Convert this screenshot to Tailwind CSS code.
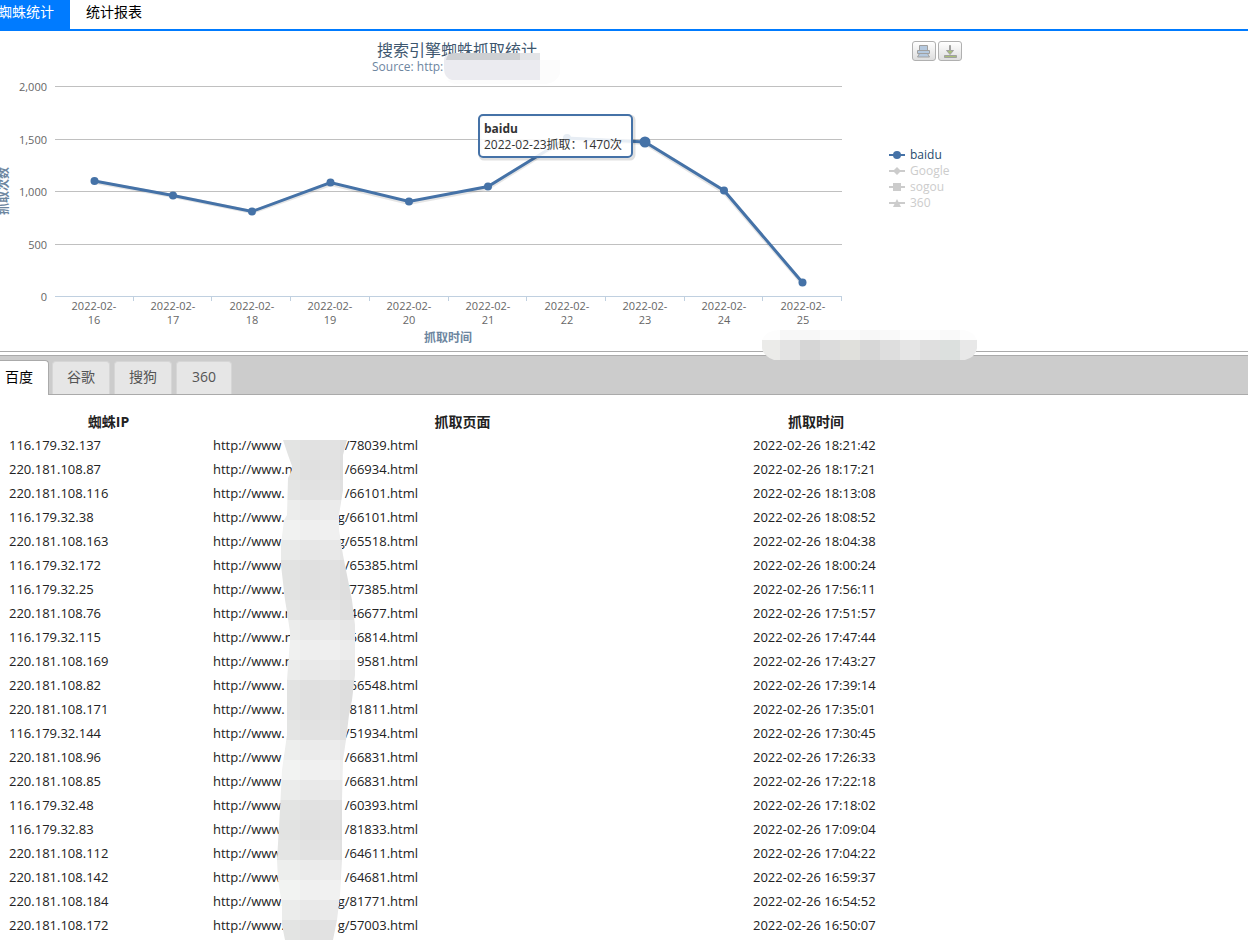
<!DOCTYPE html>
<html lang="zh-CN">
<head>
<meta charset="utf-8">
<title>蜘蛛统计</title>
<script src="https://cdn.jsdelivr.net/npm/@tailwindcss/browser@4"></script>
</head>
<body class="overflow-x-hidden bg-white font-['Open_Sans','Noto_Sans_CJK_SC',sans-serif] text-sm text-[#222]">
<nav class="flex h-[31px] border-b-2 border-[#007bff] leading-6">
  <a href="#" class="-ml-[2px] w-[72px] bg-[#007bff] text-white">蜘蛛统计</a>
  <a href="#" class="px-4 text-black">统计报表</a>
</nav>

<section class="relative flex h-[321px] border-b border-[#aaa]">
  <svg width="870" height="320" viewBox="0 31 870 320" class="shrink-0">
    <text x="457" y="56" text-anchor="middle" font-size="16" fill="#3e576f">搜索引擎蜘蛛抓取统计</text>
    <text x="372" y="71" font-size="12" fill="#6d869f">Source: http:</text>
    <path d="M444 60q0-6 6-6h90v26h-88q-8-2-8-12z" fill="#ebebf0"/>
    <path d="M446 60q1-7 8-7h66v7z" fill="#cdcfd2"/><path d="M520 53h20v7h-20z" fill="#e3e4e7"/>
    <path d="M540 60h20v14q-4 9-14 10h-88q-8 0-11-4h93z" fill="#fcfcfc"/>
    <path d="M55 86.500H842M55 139.500H842M55 191.500H842M55 244.500H842" stroke="#c0c0c0"/>
    <path d="M55 296.500H842M133.500 296v5M211.500 296v5M290.500 296v5M369.500 296v5M448.500 296v5M526.500 296v5M605.500 296v5M684.500 296v5M762.500 296v5M841.500 296v5" stroke="#c0d0e0" fill="none"/>
    <g font-size="11" fill="#666" text-anchor="end">
      <text x="47" y="91">2,000</text><text x="47" y="144">1,500</text><text x="47" y="196">1,000</text><text x="47" y="249">500</text><text x="47" y="301">0</text>
    </g>
    <g id="dates" font-size="11" fill="#666" text-anchor="middle"></g>
    <text x="448" y="342" text-anchor="middle" font-size="12" font-weight="bold" fill="#6d869f">抓取时间</text>
    <text transform="translate(8 191) rotate(-90)" text-anchor="middle" font-size="12" font-weight="bold" fill="#6d869f">抓取次数</text>
    <polyline points="95,182 173,196 252,212 331,184 409,203 488,188 567,139 645,143 724,192 803,284" fill="none" stroke="#000" stroke-opacity=".1" stroke-width="4"/>
    <polyline points="94.500,181 173,195.500 252,211.500 330.500,182.500 409,201.500 488,186.500 567,138 645,142 724,190.500 802.500,282.500" fill="none" stroke="#4572a7" stroke-width="3"/>
    <g fill="#4572a7">
      <circle cx="94.500" cy="181" r="4"/><circle cx="173" cy="195.500" r="4"/><circle cx="252" cy="211.500" r="4"/><circle cx="330.500" cy="182.500" r="4"/><circle cx="409" cy="201.500" r="4"/><circle cx="488" cy="186.500" r="4"/><circle cx="567" cy="138" r="4"/>
      <circle cx="645" cy="142" r="5.500"/><circle cx="724" cy="190.500" r="4"/><circle cx="802.500" cy="282.500" r="4"/>
    </g>
    <rect x="480" y="116" width="154" height="43" rx="4" fill="none" stroke="#000" stroke-opacity=".12" stroke-width="3"/>
    <rect x="479" y="115" width="153" height="42" rx="4" fill="#fff" fill-opacity=".87" stroke="#4572a7" stroke-width="2"/>
    <text x="484" y="133" font-size="12" font-weight="bold" fill="#333">baidu</text>
    <text x="484" y="149" font-size="12" fill="#333">2022-02-23抓取：1470次</text>
  </svg>
  <div class="pl-[19px] pt-[10px]">
    <div class="flex gap-[2px] pl-[23px]">
      <button aria-label="打印" class="h-5 w-6 rounded-[3px] border border-[#b0b0b0] bg-linear-to-b from-white to-[#dedede]">
        <svg width="22" height="18" viewBox="0 0 22 18" fill="#b5c9df" stroke="#a0a0a0"><path d="M6.500 3.500h8v5h-8zM4.500 8.500h12v3h-12zM6.500 11.500h8l2 3.500h-12z"/></svg>
      </button>
      <button aria-label="下载" class="h-5 w-6 rounded-[3px] border border-[#b0b0b0] bg-linear-to-b from-white to-[#dedede]">
        <svg width="22" height="18" viewBox="0 0 22 18" fill="#a8bf77" stroke="#a0a0a0"><path d="M10.500 3.500h1v5h3l-3.500 4-3.500-4h3zM5.500 13.500h12v2h-12z"/></svg>
      </button>
    </div>
    <div class="flex flex-col items-start pt-[86px] text-xs leading-4 text-[#ccc]">
      <button class="flex items-center gap-[5px] text-[#274b6d]"><svg width="16" height="10" fill="#4572a7"><path d="M0 4h16v2H0z"/><circle cx="8" cy="5" r="4"/></svg>baidu</button>
      <button class="flex items-center gap-[5px]"><svg width="16" height="10" fill="#ccc"><path d="M0 4h16v2H0zM8 1l4 4-4 4-4-4z"/></svg>Google</button>
      <button class="flex items-center gap-[5px]"><svg width="16" height="10" fill="#ccc"><path d="M0 4h16v2H0zM4 1h8v8H4z"/></svg>sogou</button>
      <button class="flex items-center gap-[5px]"><svg width="16" height="10" fill="#ccc"><path d="M0 4h16v2H0zM8 1l4 8H4z"/></svg>360</button>
    </div>
  </div>
  <svg width="215" height="30" viewBox="762 330 215 30" class="absolute left-[762px] top-[299px] z-10">
    <clipPath id="pill"><path d="M762 340q4-10 18-10h184q10 2 13 10v8q-1 9-12 12H774q-11-4-12-12z"/></clipPath>
    <g id="pillTiles" clip-path="url(#pill)"></g>
  </svg>
</section>

<div class="mt-[3px] flex h-10 items-end gap-1 border-y border-[#aaa] bg-[#ccc] leading-[30px]" role="tablist">
  <button role="tab" aria-selected="true" class="-mb-px -ml-px h-[35px] w-[50px] rounded-tr-[4px] border-r border-t border-[#aaa] bg-white pb-[2px] pr-[9px] text-black">百度</button>
  <button role="tab" class="-ml-px h-[33px] w-[58px] rounded-t-[4px] border border-b-0 border-[#d6d6d6] bg-[#e6e6e6] pb-[2px] text-[#555]">谷歌</button>
  <button role="tab" class="h-[33px] w-[58px] rounded-t-[4px] border border-b-0 border-[#d6d6d6] bg-[#e6e6e6] pb-[2px] text-[#555]">搜狗</button>
  <button role="tab" class="h-[33px] w-[56px] rounded-t-[4px] border border-b-0 border-[#d6d6d6] bg-[#e6e6e6] pb-[2px] text-[#555]">360</button>
</div>

<main class="relative pb-[3px] pl-2 pt-[15px]">
  <table class="w-[874px] table-fixed">
    <colgroup><col class="w-[204px]"><col class="w-[540px]"><col class="w-[130px]"></colgroup>
    <thead><tr class="h-[23px] leading-[23px]"><th class="p-0 pr-[3px]">蜘蛛IP</th><th class="p-0 pr-[39px]">抓取页面</th><th class="p-0 pr-[2px]">抓取时间</th></tr></thead>
    <tbody id="rows" class="text-[13px] leading-6"></tbody>
  </table>
  <svg width="80" height="500" viewBox="277 440 80 500" class="absolute left-[277px] top-[45px]">
    <clipPath id="strip"><path d="M283 440L288 455 292 466V470L288 478 287 515 284 520 281 545V565L285 600 287 612 290 632V640L287 680V735L282 770 281 790 280 810 277 860 278 880 282 905V925L285 940H333L337 920 340 895 342 860V800L343 760 346 740 349 715 352 700 355 675V625L352 600 350 590 343 555 339 530V515L343 490V455L347 440z"/></clipPath>
    <g id="stripTiles" clip-path="url(#strip)"></g>
  </svg>
</main>

<script>
const tile = (x, y, w, h, c) => `<rect x="${x}" y="${y}" width="${w}" height="${h}" fill="${c}" shape-rendering="crispEdges"/>`;
const xs = [94, 173, 252, 330, 409, 488, 567, 645, 724, 803];
document.getElementById('dates').innerHTML = xs.map((x, i) =>
  `<text x="${x}" y="310">2022-02-</text><text x="${x}" y="324">${16 + i}</text>`).join('');

const pill = ['#ebebe9', '#e3e3e3', '#d6d6d6', '#dcdcdc', '#e0e0dc', '#d7d7d7', '#dedede', '#e5e5e5', '#dfdfdf', '#dce0de', '#e8e8e8'];
const pale = ['#fdfdfd', '#f7f7f7', '#f7f7f7', '#fafafa', '#fafafa', '#f7f7f7', '#f9f9f9', '#fdfdfd', '#fcfcfc', '#f9f9f9', '#fdfdfd'];
document.getElementById('pillTiles').innerHTML = pill.map((c, i) =>
  tile(760 + i * 20, 330, 20, 10, pale[i]) + tile(760 + i * 20, 340, 20, 20, c)).join('');

const tones = [225, 224, 226, 234, 239, 231, 224, 224, 226, 233, 238, 233, 224, 224, 226, 235, 240, 233, 225, 224, 226, 235, 240, 233, 225];
document.getElementById('stripTiles').innerHTML = tones.map((t, r) =>
  [2, 0, 1, -2].map((d, c) => {
    const v = t + d;
    return tile(c ? 280 + c * 20 : 270, 440 + r * 20, c ? 20 : 30, 20, `rgb(${v},${v + (c ? 0 : 1)},${v})`);
  }).join('')).join('');

const visits = [
  ['116.179.32.137', 'http://www', '/78039.html', '18:21:42'],
  ['220.181.108.87', 'http://www.n', '/66934.html', '18:17:21'],
  ['220.181.108.116', 'http://www.', '/66101.html', '18:13:08'],
  ['116.179.32.38', 'http://www.', 'g/66101.html', '18:08:52'],
  ['220.181.108.163', 'http://www', 'g/65518.html', '18:04:38'],
  ['116.179.32.172', 'http://www', '/65385.html', '18:00:24'],
  ['116.179.32.25', 'http://www.', '/77385.html', '17:56:11'],
  ['220.181.108.76', 'http://www.n', '/46677.html', '17:51:57'],
  ['116.179.32.115', 'http://www.n', '/66814.html', '17:47:44'],
  ['220.181.108.169', 'http://www.n', '/19581.html', '17:43:27'],
  ['220.181.108.82', 'http://www.', '/66548.html', '17:39:14'],
  ['220.181.108.171', 'http://www.', '/81811.html', '17:35:01'],
  ['116.179.32.144', 'http://www.', '/51934.html', '17:30:45'],
  ['220.181.108.96', 'http://www', '/66831.html', '17:26:33'],
  ['220.181.108.85', 'http://www', '/66831.html', '17:22:18'],
  ['116.179.32.48', 'http://www', '/60393.html', '17:18:02'],
  ['116.179.32.83', 'http://www', '/81833.html', '17:09:04'],
  ['220.181.108.112', 'http://www', '/64611.html', '17:04:22'],
  ['220.181.108.142', 'http://www', '/64681.html', '16:59:37'],
  ['220.181.108.184', 'http://www.', 'g/81771.html', '16:54:52'],
  ['220.181.108.172', 'http://www.', 'g/57003.html', '16:50:07']
];
document.getElementById('rows').innerHTML = visits.map(([ip, host, path, time]) =>
  `<tr class="h-6"><td class="p-0 pl-px">${ip}</td><td class="p-0 pl-px"><div class="flex w-[205px] justify-between"><span>${host}</span><span>${path}</span></div></td><td class="whitespace-nowrap p-0 pl-px">2022-02-26 ${time}</td></tr>`).join('');
</script>
</body>
</html>
